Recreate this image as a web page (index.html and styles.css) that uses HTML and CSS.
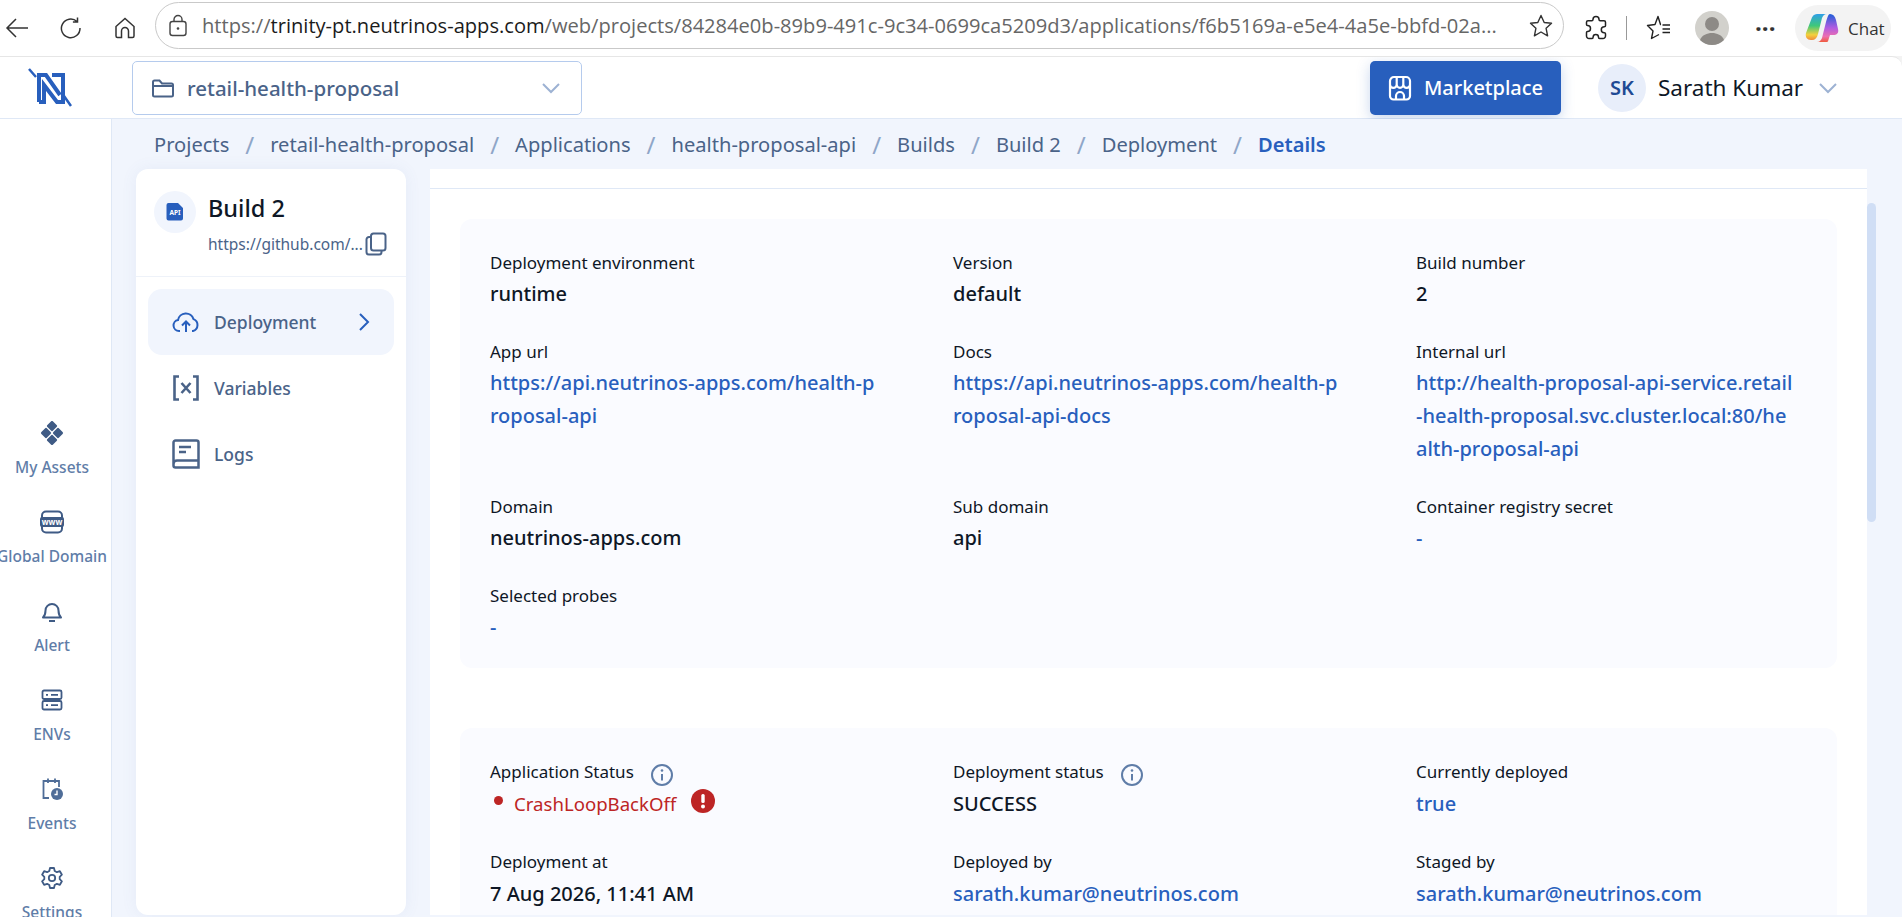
FILE: index.html
```html
<!DOCTYPE html>
<html lang="en">
<head>
    <meta charset="UTF-8">
    <meta name="viewport" content="width=device-width, initial-scale=1.0">
    <title>Deployment Details</title>
    <link rel="stylesheet" href="styles.css">
</head>
<body>
    <!-- browser bar -->
    <div class="browser">
        <svg class="b-back" width="26" height="24" viewBox="0 0 26 24"><path d="M24 12H3M12 3l-9 9 9 9" fill="none" stroke="#333" stroke-width="1.5"/></svg>
        <svg class="b-reload" width="24" height="24" viewBox="0 0 24 24"><path d="M18 5.5A9.3 9.3 0 1 0 21 12M18.5 1.5v4.6h-4.6" fill="none" stroke="#333" stroke-width="1.5"/></svg>
        <svg class="b-home" width="24" height="24" viewBox="0 0 24 24"><path d="M3 10.5 12 2.5l9 8V20a1.5 1.5 0 0 1-1.500 1.500H15.500V15a3.500 3.500 0 0 0-7 0v6.500H4.500A1.500 1.500 0 0 1 3 20z" fill="none" stroke="#333" stroke-width="1.5"/></svg>
        <div class="address">
            <svg width="20" height="24" viewBox="0 0 20 24"><rect x="2" y="7.500" width="16" height="14" rx="2.500" fill="none" stroke="#444" stroke-width="1.400"/><path d="M6 7.500V5.500a4 4 0 0 1 8 0v2" fill="none" stroke="#444" stroke-width="1.400"/><circle cx="10" cy="14.500" r="1.300" fill="#444"/></svg>
            <span class="url">https://<b>trinity-pt.neutrinos-apps.com</b>/web/projects/84284e0b-89b9-491c-9c34-0699ca5209d3/applications/f6b5169a-e5e4-4a5e-bbfd-02a...</span>
            <svg class="star" width="26" height="26" viewBox="0 0 26 26"><path d="M13 2.500l3.200 7 7.300.8-5.400 5 1.500 7.500-6.600-3.800-6.600 3.800 1.500-7.500-5.400-5 7.300-.8z" fill="none" stroke="#333" stroke-width="1.400" stroke-linejoin="round"/></svg>
        </div>
        <svg class="b-ext" width="24" height="26" viewBox="0 0 24 26"><path d="M9 4.500a3 3 0 0 1 6 0c0 .8 .5 1.200 1.200 1.200H20a1.500 1.500 0 0 1 1.500 1.500v3.500c0 .7 -.6 1 -1.200 1a3 3 0 0 0 0 6c.6 0 1.200 .4 1.200 1v2.300A2.500 2.500 0 0 1 19 23.500h-3.500c-.7 0 -1 -.5 -1 -1.200a2.700 2.700 0 0 0 -5.400 0c0 .7 -.4 1.200 -1 1.200H5a2.500 2.500 0 0 1 -2.500 -2.500V17.500c0 -.7 .4 -1 1 -1a3 3 0 0 0 0 -6c-.6 0 -1 -.4 -1 -1V7.200A1.500 1.500 0 0 1 4 5.700h3.800C8.500 5.700 9 5.200 9 4.500z" fill="none" stroke="#222" stroke-width="1.500"/></svg>
        <span class="b-sep"></span>
        <svg class="b-fav" width="26" height="26" viewBox="0 0 26 26"><path d="M15 9.500H14.500L12 1.500 9 9.500 1.500 10.500 7 16 5.500 23.500 13 19.500M16.500 10H24M16.500 14H24M16.500 17.500H24" fill="none" stroke="#222" stroke-width="1.400" stroke-linejoin="round"/></svg>
        <svg class="b-user" width="34" height="34" viewBox="0 0 34 34"><circle cx="17" cy="17" r="17" fill="#d2d1cc"/><circle cx="17" cy="13" r="7" fill="#8d8a86"/><path d="M5 29c2-5 7-7 12-7s10 2 12 7a17 17 0 0 1-24 0z" fill="#8d8a86"/></svg>
        <span class="b-dots">···</span>
        <div class="chat">
            <svg width="34" height="34" viewBox="0 0 34 34">
                <defs>
                    <linearGradient id="cpA" x1="0" y1="0" x2="0" y2="1"><stop offset="0" stop-color="#2f9fe8"/><stop offset=".45" stop-color="#3fc87a"/><stop offset=".8" stop-color="#f5d03c"/><stop offset="1" stop-color="#f08a3c"/></linearGradient>
                    <linearGradient id="cpB" x1="0" y1="0" x2="0" y2="1"><stop offset="0" stop-color="#1f5fd8"/><stop offset=".5" stop-color="#b25ce0"/><stop offset=".8" stop-color="#ec6fb0"/><stop offset="1" stop-color="#ef5a3c"/></linearGradient>
                </defs>
                <path d="M12 3h10c-3 0-4 2-5 4l-4 16c-1 4-3 6-6 6H6c-4 0-6-3-5-7L6 9c1-4 3-6 6-6z" fill="url(#cpA)"/>
                <path d="M22 31H12c3 0 4-2 5-4l4-16c1-3 2-8 4-8 3 0 5 2 6 6l2 9c1 4-1 6-5 6h-3l-1 3c-1 3-1 4-2 4z" fill="url(#cpB)"/>
            </svg>
            <span>Chat</span>
        </div>
    </div>

    <div class="app">
        <header class="topbar">
            <div class="logo">
                <svg width="44" height="40" viewBox="0 0 44 40"><path d="M1 1l7 8M36 28l7 10" stroke="#285fbd" stroke-width="2.500"/><path d="M11 34V7h7l14 20M11 34h5V17l13 17h6V7H24" fill="none" stroke="#285fbd" stroke-width="4"/></svg>
            </div>
            <div class="project-select">
                <svg width="24" height="20" viewBox="0 0 24 20"><path d="M2 17V4a1.500 1.500 0 0 1 1.500-1.500h5L11 5.500h9.500A1.500 1.500 0 0 1 22 7v10a1.500 1.500 0 0 1-1.500 1.500h-17A1.500 1.500 0 0 1 2 17zM2 8h20" fill="none" stroke="#4a6388" stroke-width="2"/></svg>
                <span class="project-name">retail-health-proposal</span>
                <svg class="chev" width="20" height="12" viewBox="0 0 20 12"><path d="M2 2l8 8 8-8" fill="none" stroke="#9db2d3" stroke-width="2"/></svg>
            </div>
            <button class="market">
                <svg width="24" height="26" viewBox="0 0 24 26"><path d="M2 6a4 4 0 0 1 4-4h12a4 4 0 0 1 4 4v15a3.500 3.500 0 0 1-3.500 3.500h-13A3.500 3.500 0 0 1 2 21zM2 9.500a3.300 3.300 0 0 0 6.700 0 3.300 3.300 0 0 0 6.600 0 3.300 3.300 0 0 0 6.700 0M8.700 9.500V2M15.300 9.500V2M8 24v-3a4 4 0 0 1 8 0v3" fill="none" stroke="#fff" stroke-width="2.200"/></svg>
                Marketplace
            </button>
            <div class="avatar">SK</div>
            <span class="username">Sarath Kumar</span>
            <svg class="user-chev" width="20" height="12" viewBox="0 0 20 12"><path d="M2 2l8 8 8-8" fill="none" stroke="#9db2d3" stroke-width="2"/></svg>
        </header>

        <div class="layout">
            <nav class="sidebar">
                <a class="side-item">
                    <svg width="24" height="24" viewBox="0 0 24 24"><g fill="#3f5b85"><rect x="8" y="1" width="8" height="8" rx="1.500" transform="rotate(45 12 5)"/><rect x="2" y="8" width="8" height="8" rx="1.500" transform="rotate(45 6 12)"/><rect x="14" y="8" width="8" height="8" rx="1.500" transform="rotate(45 18 12)"/><rect x="8" y="15" width="8" height="8" rx="1.500" transform="rotate(45 12 19)"/></g></svg>
                    My Assets
                </a>
                <a class="side-item">
                    <svg width="24" height="24" viewBox="0 0 24 24"><rect x="2" y="1.500" width="20" height="21" rx="4" fill="none" stroke="#3f5b85" stroke-width="2"/><rect x="0" y="7" width="24" height="10" rx="2" fill="#3f5b85"/><text x="12" y="14.500" class="www">www</text></svg>
                    Global Domain
                </a>
                <a class="side-item">
                    <svg width="24" height="24" viewBox="0 0 24 24"><path d="M3 18.500c2-2 2.500-3.500 2.500-7a6.500 6.500 0 0 1 13 0c0 3.500 .5 5 2.500 7zM9 22h6" fill="none" stroke="#3f5b85" stroke-width="2" stroke-linejoin="round"/></svg>
                    Alert
                </a>
                <a class="side-item">
                    <svg width="24" height="24" viewBox="0 0 24 24"><g fill="none" stroke="#3f5b85" stroke-width="1.800"><rect x="2.500" y="2.500" width="19" height="8.500" rx="1.500"/><rect x="2.500" y="13" width="19" height="8.500" rx="1.500"/><path d="M6 6.800h2M11 6.800h7M6 17.200h2M11 17.200h7"/></g></svg>
                    ENVs
                </a>
                <a class="side-item">
                    <svg width="24" height="24" viewBox="0 0 24 24"><path d="M9 21H3.500V4H19v6M8 1.500V6M15 1.500V6" fill="none" stroke="#4f6d98" stroke-width="1.800"/><circle cx="17" cy="17" r="6" fill="#4f6d98"/><path d="M17 13.500V17.500h-2.500" fill="none" stroke="#fff" stroke-width="1.400"/></svg>
                    Events
                </a>
                <a class="side-item">
                    <svg width="24" height="24" viewBox="0 0 24 24"><path d="M10 2h4l.7 3 2.200 1.200 3-1 2 3.500-2.200 2.100v2.400l2.200 2.100-2 3.500-3-1-2.200 1.200-.7 3h-4l-.7-3-2.200-1.200-3 1-2-3.500 2.200-2.100v-2.400L2.100 8.700l2-3.500 3 1L9.300 5z" fill="none" stroke="#3f5b85" stroke-width="1.800" stroke-linejoin="round"/><circle cx="12" cy="12" r="3.200" fill="none" stroke="#3f5b85" stroke-width="1.800"/></svg>
                    Settings
                </a>
            </nav>

            <div class="content">
                <div class="breadcrumb">
                    <span>Projects</span><i>/</i><span>retail-health-proposal</span><i>/</i><span>Applications</span><i>/</i><span>health-proposal-api</span><i>/</i><span>Builds</span><i>/</i><span>Build 2</span><i>/</i><span>Deployment</span><i>/</i><span class="current">Details</span>
                </div>
                <div class="columns">
                    <aside class="build-card">
                        <div class="build-head">
                            <div class="build-icon">
                                <svg width="18" height="18" viewBox="0 0 18 18"><path d="M2.500 0H12l5 5v10.500a2 2 0 0 1-2 2H2.500a2 2 0 0 1-2-2V2a2 2 0 0 1 2-2z" fill="#285fbd"/><text x="9" y="12" class="api">API</text></svg>
                            </div>
                            <div class="build-info">
                                <div class="build-title">Build 2</div>
                                <div class="build-url">
                                    <span>https://github.com/...</span>
                                    <svg class="copy" width="22" height="24" viewBox="0 0 22 24"><rect x="6" y="1.500" width="14.500" height="17" rx="2.500" fill="none" stroke="#4a6388" stroke-width="2"/><path d="M6 5H4a2.500 2.500 0 0 0-2.500 2.500V20A2.500 2.500 0 0 0 4 22.500h10a2.500 2.500 0 0 0 2.500-2.500v-1.500" fill="none" stroke="#4a6388" stroke-width="2"/></svg>
                                </div>
                            </div>
                        </div>
                        <ul class="build-menu">
                            <li class="active">
                                <svg width="28" height="24" viewBox="0 0 28 24"><path d="M8 21H7a5.500 5.500 0 0 1-1-10.900 8 8 0 0 1 15.500-1A6.300 6.300 0 0 1 21 21h-1M14 22V12M10 15.500l4-4 4 4" fill="none" stroke="#285fbd" stroke-width="2"/></svg>
                                <span>Deployment</span>
                                <svg class="arrow" width="12" height="20" viewBox="0 0 12 20"><path d="M2 2l8 8-8 8" fill="none" stroke="#285fbd" stroke-width="2"/></svg>
                            </li>
                            <li>
                                <svg width="28" height="28" viewBox="0 0 28 28"><path d="M7 2.500H2.500v23H7M21 2.500h4.500v23H21M9.500 9l9 10M18.500 9l-9 10" fill="none" stroke="#4a6388" stroke-width="2.600"/></svg>
                                <span>Variables</span>
                            </li>
                            <li>
                                <svg width="28" height="30" viewBox="0 0 28 30"><path d="M3.500 1.500h21a2 2 0 0 1 2 2V28.500h-23a2 2 0 0 1-2-2V3.500a2 2 0 0 1 2-2zM1.500 25a3.500 3.500 0 0 1 3.500-3.500h21.500M7 8h12M7 13h7" fill="none" stroke="#4a6388" stroke-width="2.500"/></svg>
                                <span>Logs</span>
                            </li>
                        </ul>
                    </aside>

                    <main class="panel">
                        <div class="panel-head"></div>
                        <section class="info-card">
                            <div class="info-grid">
                                <div class="field"><label>Deployment environment</label><div class="val">runtime</div></div>
                                <div class="field"><label>Version</label><div class="val">default</div></div>
                                <div class="field"><label>Build number</label><div class="val">2</div></div>

                                <div class="field"><label>App url</label><div class="val link">https://api.neutrinos-apps.com/health-p<br>roposal-api</div></div>
                                <div class="field"><label>Docs</label><div class="val link">https://api.neutrinos-apps.com/health-p<br>roposal-api-docs</div></div>
                                <div class="field"><label>Internal url</label><div class="val link">http://health-proposal-api-service.retail<br>-health-proposal.svc.cluster.local:80/he<br>alth-proposal-api</div></div>

                                <div class="field"><label>Domain</label><div class="val">neutrinos-apps.com</div></div>
                                <div class="field"><label>Sub domain</label><div class="val">api</div></div>
                                <div class="field"><label>Container registry secret</label><div class="val link">-</div></div>

                                <div class="field"><label>Selected probes</label><div class="val link">-</div></div>
                            </div>
                        </section>

                        <section class="info-card second">
                            <div class="info-grid">
                                <div class="field">
                                    <label>Application Status
                                        <svg class="info" width="24" height="24" viewBox="0 0 24 24"><circle cx="12" cy="12" r="10" fill="none" stroke="#5f7da8" stroke-width="2"/><path d="M12 11v6.500" stroke="#5f7da8" stroke-width="2"/><circle cx="12" cy="7.500" r="1.300" fill="#5f7da8"/></svg>
                                    </label>
                                    <div class="val status">
                                        <span class="dot"></span>CrashLoopBackOff
                                        <svg class="alert" width="24" height="24" viewBox="0 0 24 24"><circle cx="12" cy="12" r="12" fill="#bd2525"/><rect x="10.300" y="5" width="3.400" height="9" rx="1.500" fill="#fff"/><circle cx="12" cy="17.500" r="2" fill="#fff"/></svg>
                                    </div>
                                </div>
                                <div class="field">
                                    <label>Deployment status
                                        <svg class="info" width="24" height="24" viewBox="0 0 24 24"><circle cx="12" cy="12" r="10" fill="none" stroke="#5f7da8" stroke-width="2"/><path d="M12 11v6.500" stroke="#5f7da8" stroke-width="2"/><circle cx="12" cy="7.500" r="1.300" fill="#5f7da8"/></svg>
                                    </label>
                                    <div class="val">SUCCESS</div>
                                </div>
                                <div class="field"><label>Currently deployed</label><div class="val link">true</div></div>

                                <div class="field"><label>Deployment at</label><div class="val">7 Aug 2026, 11:41 AM</div></div>
                                <div class="field"><label>Deployed by</label><div class="val link">sarath.kumar@neutrinos.com</div></div>
                                <div class="field"><label>Staged by</label><div class="val link">sarath.kumar@neutrinos.com</div></div>
                            </div>
                        </section>
                    </main>
                    <div class="scroll-track"><div class="scroll-thumb"></div></div>
                </div>
            </div>
        </div>
    </div>
</body>
</html>
```

FILE: styles.css
```css
* {
    box-sizing: border-box;
}

html, body {
    margin: 0;
    height: 100%;
    overflow: hidden;
}

body {
    font-family: "Noto Sans", Roboto, sans-serif;
    background-color: #f3f3f3;
    color: #0e1726;
}

/* browser bar */
.browser {
    height: 56px;
    display: flex;
    align-items: center;
    background-color: #fff;
    font-family: "Open Sans", sans-serif;
}

.b-back {
    margin-left: 4px;
}

.b-reload {
    margin-left: 29px;
}

.b-home {
    margin-left: 30px;
}

.address {
    margin-left: 18px;
    width: 1409px;
    height: 47px;
    border: 1px solid #c9c9c9;
    border-radius: 24px;
    display: flex;
    align-items: center;
    padding-left: 12px;
    margin-top: -5px;
}

.url {
    margin-left: 14px;
    font-size: 20.1px;
    color: #666;
    white-space: nowrap;
    flex: 1;
}

.url b {
    font-weight: 400;
    color: #1b1b1b;
}

.star {
    margin-right: 9px;
}

.b-ext {
    margin-left: 20px;
}

.b-sep {
    width: 1px;
    height: 24px;
    margin-left: 18px;
    background-color: #999;
}

.b-fav {
    margin-left: 19px;
}

.b-user {
    margin-left: 23px;
}

.b-dots {
    margin-left: 26px;
    width: 22px;
    font-size: 24px;
    font-weight: 700;
    line-height: 1;
    color: #333;
}

.chat {
    margin-left: 18px;
    width: 96px;
    height: 46px;
    border-radius: 23px;
    background-color: #f3f3f3;
    display: flex;
    align-items: center;
    gap: 9px;
    padding-left: 10px;
    font-size: 17px;
    color: #333;
}

/* app */
.app {
    height: 861px;
    display: flex;
    flex-direction: column;
    background-color: #fff;
    border-top: 1px solid #e6e6e6;
    border-top-right-radius: 10px;
    overflow: hidden;
}

.topbar {
    height: 62px;
    flex: none;
    display: flex;
    align-items: center;
    border-bottom: 1px solid #dfe8f6;
}

.logo {
    width: 132px;
    padding-left: 28px;
    display: flex;
}

.project-select {
    width: 450px;
    height: 54px;
    border: 1px solid #b5cbed;
    border-radius: 5px;
    display: flex;
    align-items: center;
    padding: 0 20px 0 18px;
    gap: 12px;
}

.project-name {
    flex: 1;
    font-size: 20.5px;
    font-weight: 500;
    color: #4a6388;
}

.market {
    margin-left: 788px;
    width: 191px;
    height: 54px;
    border: none;
    border-radius: 5px;
    background-color: #285fbd;
    color: #fff;
    font-family: inherit;
    font-size: 20px;
    font-weight: 500;
    display: flex;
    align-items: center;
    justify-content: center;
    gap: 12px;
    box-shadow: 0 4px 14px rgba(40, 95, 189, 0.25);
}

.avatar {
    margin-left: 37px;
    width: 48px;
    height: 48px;
    border-radius: 50%;
    background-color: #e8eefa;
    color: #1f4a94;
    font-size: 20px;
    font-weight: 600;
    display: flex;
    align-items: center;
    justify-content: center;
}

.username {
    margin-left: 12px;
    width: 160px;
    font-size: 22.500px;
    color: #0e1726;
}

.user-chev {
    flex: none;
}

.layout {
    flex: 1;
    display: flex;
    min-height: 0;
}

.sidebar {
    width: 112px;
    flex: none;
    border-right: 1px solid #dfe8f6;
    padding: 302px 7px 0 0;
    display: flex;
    flex-direction: column;
    align-items: center;
    background-color: #fff;
    overflow: hidden;
}

.side-item {
    height: 89px;
    flex: none;
    display: flex;
    flex-direction: column;
    align-items: center;
    gap: 12px;
    font-size: 15.5px;
    font-weight: 500;
    line-height: 20px;
    color: #5f7da8;
    white-space: nowrap;
}

.www {
    font-family: "Noto Sans", sans-serif;
    font-size: 8px;
    font-weight: 700;
    fill: #fff;
    text-anchor: middle;
}

.content {
    flex: 1;
    min-width: 0;
    background-color: #f1f5fd;
    display: flex;
    flex-direction: column;
}

.breadcrumb {
    height: 50px;
    flex: none;
    padding-left: 42px;
    display: flex;
    align-items: center;
    font-size: 20.1px;
    color: #4a6388;
}

.breadcrumb i {
    font-style: normal;
    color: #8fa6c8;
    margin: 0 16px;
    font-size: 24px;
}

.breadcrumb .current {
    font-weight: 600;
    color: #285fbd;
}

.columns {
    flex: 1;
    min-height: 0;
    display: flex;
    padding: 0 26px 2px 24px;
}

.build-card {
    width: 270px;
    flex: none;
    background-color: #fff;
    border-radius: 12px;
    box-shadow: 0 0 16px rgba(90, 120, 180, 0.08);
}

.build-head {
    height: 108px;
    border-bottom: 1px solid #eef2f9;
    display: flex;
    padding: 22px 0 0 18px;
    gap: 12px;
}

.build-icon {
    width: 42px;
    height: 42px;
    border-radius: 50%;
    background-color: #f1f5fd;
    display: flex;
    align-items: center;
    justify-content: center;
    flex: none;
}

.build-title {
    font-size: 23.500px;
    font-weight: 500;
    line-height: 34px;
}

.api {
    font-family: "Noto Sans", sans-serif;
    font-size: 6.500px;
    font-weight: 700;
    fill: #fff;
    text-anchor: middle;
}

.build-url {
    display: flex;
    align-items: center;
    font-size: 15.500px;
    color: #4a6388;
    margin-top: 7px;
    white-space: nowrap;
}

.copy {
    margin-left: 2px;
}

.build-menu {
    list-style: none;
    margin: 12px 12px 0;
    padding: 0;
}

.build-menu li {
    height: 66px;
    padding-left: 24px;
    display: flex;
    align-items: center;
    font-size: 17.500px;
    font-weight: 500;
    color: #4a6388;
    border-radius: 14px;
}

.build-menu li svg:first-child {
    flex: none;
    margin-right: 14px;
}

.build-menu li span {
    flex: 1;
}

.build-menu .active {
    background-color: #f1f5fd;
}

.arrow {
    margin-right: 24px;
}

.panel {
    flex: 1;
    min-width: 0;
    margin-left: 24px;
    background-color: #fff;
    overflow: hidden;
}

.panel-head {
    height: 20px;
    border-bottom: 1px solid #dfe8f6;
}

.info-card {
    margin: 30px 30px 0;
    padding: 30px 28px 25px 30px;
    background-color: #fafbff;
    border-radius: 12px;
}

.second {
    margin-top: 60px;
    padding-top: 30px;
}

.info-grid {
    display: grid;
    grid-template-columns: repeat(3, 1fr);
    column-gap: 70px;
    row-gap: 28px;
}

.field label {
    display: flex;
    align-items: center;
    height: 26px;
    font-size: 17px;
    color: #0e1726;
}

.info {
    margin: 8px 0 0 16px;
}

.val {
    margin-top: 2px;
    font-size: 20px;
    font-weight: 500;
    line-height: 33px;
}

.second .val {
    margin-top: 3px;
}

.link {
    color: #285fbd;
}

.status {
    display: flex;
    align-items: center;
    font-size: 18.6px;
    font-weight: 400;
    color: #bd2525;
}

.dot {
    width: 9px;
    height: 9px;
    margin: -6px 11px 0 4px;
    border-radius: 50%;
    background-color: #bd2525;
}

.alert {
    margin: -6px 0 0 15px;
}

.scroll-track {
    width: 9px;
    flex: none;
    padding-top: 34px;
}

.scroll-thumb {
    height: 319px;
    border-radius: 5px;
    background-color: #d0def5;
}
```
